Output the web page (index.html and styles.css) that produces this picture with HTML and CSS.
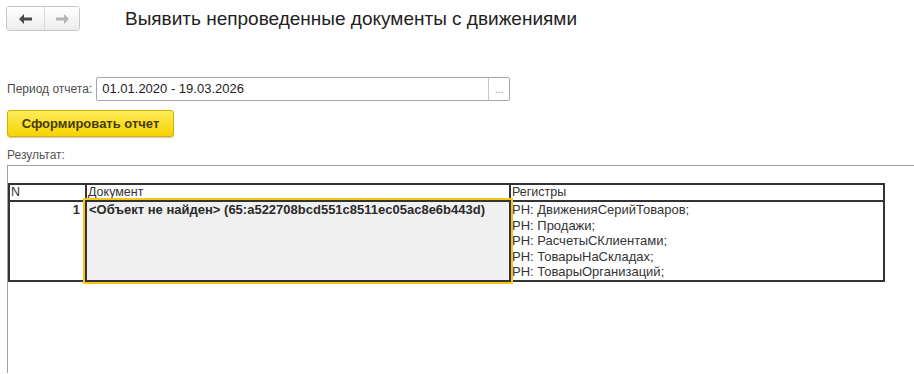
FILE: index.html
```html
<!DOCTYPE html>
<html lang="ru">
<head>
    <meta charset="UTF-8">
    <title>Выявить непроведенные документы с движениями</title>
    <link rel="stylesheet" href="styles.css">
</head>
<body>
    <div class="header">
        <div class="nav">
            <button class="nav-btn">
                <svg width="14" height="10" viewBox="0 0 14 10"><path d="M0 5 L5 0 L5 3.5 L13 3.5 L13 6.5 L5 6.5 L5 10 Z" fill="#4a4a4a"/></svg>
            </button>
            <button class="nav-btn">
                <svg width="14" height="10" viewBox="0 0 14 10"><path d="M14 5 L9 0 L9 3.5 L1 3.5 L1 6.5 L9 6.5 L9 10 Z" fill="#b4b4b4"/></svg>
            </button>
        </div>
        <h1>Выявить непроведенные документы с движениями</h1>
    </div>

    <div class="period">
        <span class="label">Период отчета:</span>
        <div class="field">
            <span class="field-value">01.01.2020 - 19.03.2026</span>
            <span class="field-btn">...</span>
        </div>
    </div>

    <button class="run-button">Сформировать отчет</button>

    <div class="result-label">Результат:</div>
    <div class="result">
        <table class="report">
            <tr class="head">
                <td class="col-n">N</td>
                <td class="col-doc">Документ</td>
                <td class="col-reg">Регистры</td>
            </tr>
            <tr>
                <td class="num">1</td>
                <td class="doc">&lt;Объект не найден&gt; (65:a522708bcd551c8511ec05ac8e6b443d)</td>
                <td class="regs">
                    РН: ДвиженияСерийТоваров;<br>
                    РН: Продажи;<br>
                    РН: РасчетыСКлиентами;<br>
                    РН: ТоварыНаСкладах;<br>
                    РН: ТоварыОрганизаций;
                </td>
            </tr>
        </table>
    </div>
</body>
</html>
```

FILE: styles.css
```css
body {
    margin: 0;
    background-color: #fff;
    font-family: "Liberation Sans", Arial, sans-serif;
    font-size: 13px;
    color: #333;
    overflow: hidden;
}

.header {
    display: flex;
    align-items: center;
    padding: 6px 0 0 6px;
    height: 25px;
}

.nav {
    display: flex;
    border: 1px solid #c8c8c8;
    border-radius: 3px;
    overflow: hidden;
}

.nav-btn {
    width: 37px;
    height: 23px;
    border: none;
    padding: 0;
    background: linear-gradient(#ffffff, #ececec);
    display: flex;
    justify-content: center;
    align-items: center;
}

.nav-btn + .nav-btn {
    border-left: 1px solid #d8d8d8;
    width: 35px;
}

h1 {
    margin: 0 0 0 45px;
    font-size: 19px;
    font-weight: normal;
    color: #222;
}

.period {
    display: flex;
    align-items: center;
    margin: 46px 0 0 7px;
}

.label {
    color: #4d4d4d;
    font-size: 12px;
    margin-right: 4px;
}

.field {
    display: flex;
    width: 412px;
    height: 22px;
    border: 1px solid #a8a8a8;
    border-radius: 2px;
}

.field-value {
    flex: 1;
    padding: 3px 0 0 5px;
    color: #222;
}

.field-btn {
    width: 20px;
    border-left: 1px solid #c8c8c8;
    color: #888;
    font-size: 10px;
    text-align: center;
    line-height: 24px;
}

.run-button {
    display: block;
    margin: 9px 0 0 7px;
    width: 167px;
    height: 27px;
    border: 1px solid #d4b000;
    border-radius: 3px;
    background: linear-gradient(#ffec5c, #f5d400);
    box-shadow: 0 1px 1px rgba(0, 0, 0, 0.2);
    font-family: inherit;
    font-size: 13px;
    font-weight: bold;
    color: #4a3a00;
}

.result-label {
    margin: 11px 0 0 7px;
    font-size: 12px;
    color: #555;
}

.result {
    margin: 3px 0 0 7px;
    border-top: 1px solid #a0a0a0;
    border-left: 1px solid #a0a0a0;
    height: 190px;
    padding-top: 17px;
}

.report {
    border-collapse: collapse;
    width: 877px;
    font-size: 13px;
    color: #333;
}

.report td {
    border: 2px solid #333;
    padding: 0 1px;
    vertical-align: top;
    line-height: 15.5px;
}

.head td {
    font-size: 12.5px;
    line-height: 15px;
}

.col-n {
    width: 73px;
}

.col-doc {
    width: 420px;
}

.num {
    text-align: right;
    font-weight: bold;
}

.report td.num {
    padding-right: 5px;
}

.report td.doc {
    font-weight: bold;
    color: #2a2a2a;
    background-color: #f0f0f0;
    outline: 2px solid #f5c518;
    outline-offset: 1px;
    padding-left: 2px;
}
```
